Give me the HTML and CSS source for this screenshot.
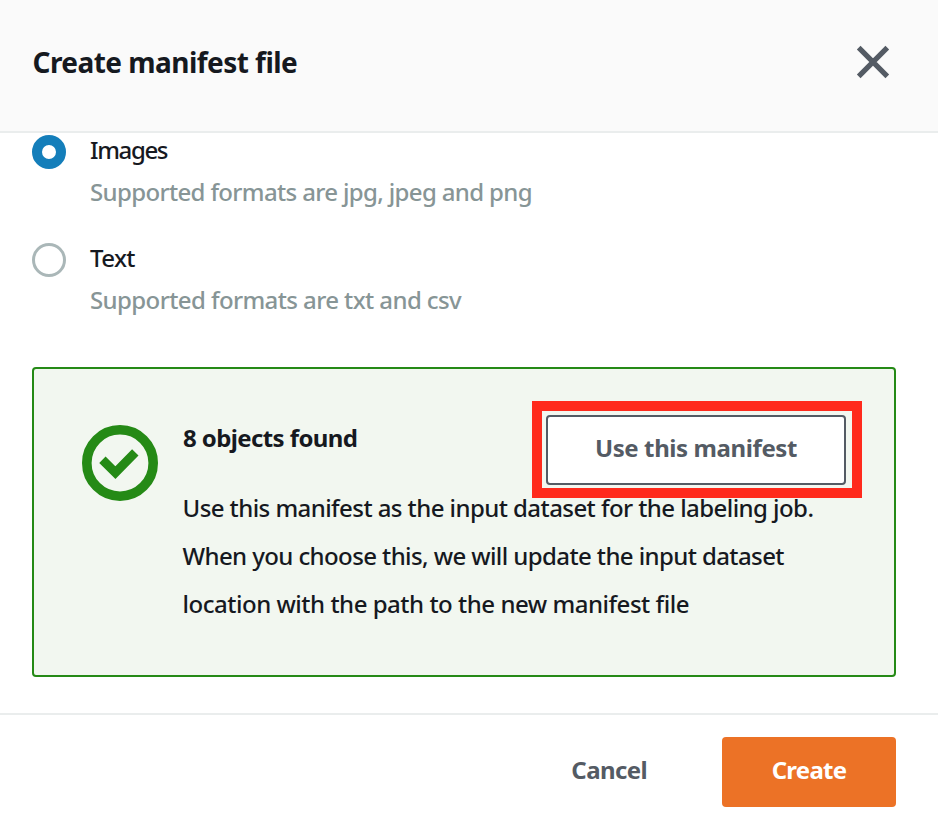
FILE: index.html
```html
<!DOCTYPE html>
<html lang="en">
<head>
<meta charset="utf-8">
<title>Create manifest file</title>
<link rel="stylesheet" href="styles.css">
</head>
<body>
<div class="modal">
  <header class="modal-header">
    <h1 class="title">Create manifest file</h1>
    <button class="close" aria-label="Close"><svg width="34" height="34" viewBox="0 0 34 34"><path d="M2.7 2.7 31.3 31.3M31.3 2.7 2.7 31.3" stroke="#545b64" stroke-width="5.2" fill="none"/></svg></button>
  </header>
  <main class="modal-body">
    <div class="option">
      <span class="radio radio-on"></span>
      <div class="option-text">
        <div class="label label-images">Images</div>
        <div class="hint hint-images">Supported formats are jpg, jpeg and png</div>
      </div>
    </div>
    <div class="option">
      <span class="radio"></span>
      <div class="option-text">
        <div class="label">Text</div>
        <div class="hint">Supported formats are txt and csv</div>
      </div>
    </div>
    <section class="alert">
      <svg class="check" width="76" height="76" viewBox="0 0 76 76"><circle cx="38" cy="38" r="33.2" fill="none" stroke="#258a16" stroke-width="9.6"/><path d="M20.4 34.8 33.4 47.6 53.3 27.4" fill="none" stroke="#258a16" stroke-width="9"/></svg>
      <div class="alert-content">
        <div class="alert-top">
          <h2 class="alert-title">8 objects found</h2>
          <div class="highlight"><button class="btn btn-use">Use this manifest</button></div>
        </div>
        <p class="alert-text">
          <span class="line">Use this manifest as the input dataset for the labeling job.</span>
          <span class="line line-middle">When you choose this, we will update the input dataset</span>
          <span class="line line-last">location with the path to the new manifest file</span>
        </p>
      </div>
    </section>
  </main>
  <footer class="modal-footer">
    <button class="btn btn-cancel">Cancel</button>
    <button class="btn btn-create">Create</button>
  </footer>
</div>
</body>
</html>
```
FILE: styles.css
```css
* { box-sizing: border-box; }
body { margin: 0; font-family: "Noto Sans", "Open Sans", sans-serif; font-size: 24px; color: #16191f; background: #fff; }
h1, h2, p { margin: 0; }
button { font: inherit; padding: 0; border: 0; background: none; }
.modal { height: 829px; display: flex; flex-direction: column; }
.modal-header { height: 133px; padding: 0 48px 8px 32.5px; display: flex; align-items: center; justify-content: space-between; background: #fafafa; border-bottom: 2px solid #eaeded; }
.title { font-size: 28px; line-height: 36px; font-weight: 700; letter-spacing: -0.54px; }
.close { width: 34px; height: 34px; }
.close svg { display: block; }
.modal-body { flex: 1; padding: 0 42px 0 32px; }
.option { display: flex; gap: 24px; height: 108px; padding-top: 2px; }
.radio { width: 34px; height: 34px; flex: none; border: 3px solid #aab7b8; border-radius: 50%; background: #fff; }
.radio-on { border: 10px solid #147eba; }
.label, .hint { line-height: 42px; margin-top: -6px; white-space: nowrap; font-weight: 500; letter-spacing: -0.6px; }
.label-images { letter-spacing: -1.35px; }
.hint { color: #879596; margin-top: 0; }
.hint-images { letter-spacing: -0.65px; }
.alert { margin-top: 18px; height: 310px; display: flex; gap: 24px; padding: 32px 32px 0 48px; border: 2px solid #258a16; border-radius: 4px; background: #f2f7f0; }
.check { flex: none; margin-top: 24px; }
.alert-content { flex: 1; }
.alert-top { display: flex; justify-content: space-between; height: 97px; }
.alert-title { font-size: 24px; font-weight: 700; line-height: 36px; margin: 19px 0 0 1px; letter-spacing: -0.6px; }
.highlight { width: 330px; height: 97px; border: 10px solid #ff2a1c; padding: 4px; }
.btn { height: 70px; border-radius: 4px; font-weight: 700; color: #545b64; white-space: nowrap; line-height: 66px; padding-bottom: 4px; letter-spacing: -0.6px; }
.btn-use { width: 300px; border: 2px solid #545b64; background: #fff; line-height: 62px; letter-spacing: -0.4px; }
.alert-text { margin-top: -14px; padding-left: 0.5px; font-weight: 500; }
.line { display: block; line-height: 48px; white-space: nowrap; letter-spacing: -0.57px; }
.line-middle { letter-spacing: -0.6px; }
.line-last { letter-spacing: -0.48px; }
.modal-footer { height: 116px; border-top: 2px solid #eaeded; padding: 22px 42px 0 0; display: flex; justify-content: flex-end; gap: 75px; }
.btn-create { width: 174px; background: #ec7226; color: #fff; letter-spacing: -0.75px; }
```
